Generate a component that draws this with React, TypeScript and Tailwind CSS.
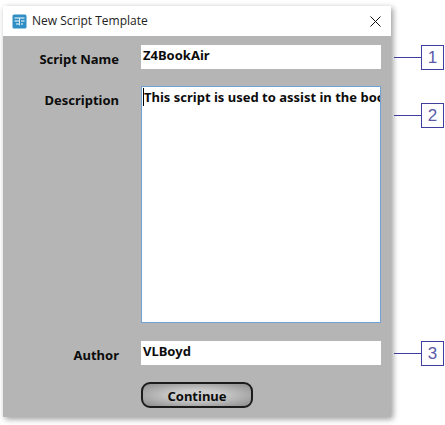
const boldFont = "font-['Noto_Sans',sans-serif] font-bold text-[13px] leading-[18px] text-[#0c0c0c]"

function Callout({ n, className }: { n: number; className: string }) {
  return (
    <div className={`flex items-center ${className}`}>
      <div className="w-[27px] h-px bg-[#3f3f9e]" />
      <div className="w-[23px] h-[25px] border border-[#3f3f9e] flex items-center justify-center text-[17px] text-[#5a5aa8] font-['Liberation_Sans',sans-serif]">
        {n}
      </div>
    </div>
  )
}

export default function App() {
  return (
    <div className="w-[445px] h-[425px] bg-white flex overflow-hidden">
      {/* Dialog window */}
      <div className="ml-[3px] mt-[6px] w-[388px] h-[411px] flex flex-col bg-[#b5b5b5] shadow-[2px_2px_6px_rgba(0,0,0,0.4)]">
        <div className="h-[30px] bg-white flex items-center pl-[9px] pr-[9px]">
          <svg width="15" height="15" viewBox="0 0 15 15" className="shrink-0">
            <rect x="0.5" y="0.5" width="14" height="14" rx="1.5" fill="#2f8fc4" />
            <path d="M2.5 4h10M2.5 7h4.5M9 7h3.5M4 10h3M9 10h2" stroke="#fff" strokeWidth="1.2" />
            <path d="M7.5 4v7.5" stroke="#d5ebf7" strokeWidth="1" />
          </svg>
          <span className="ml-[5px] flex-1 text-[12px] text-[#222] font-['Open_Sans',sans-serif]">New Script Template</span>
          <svg width="11" height="11" viewBox="0 0 11 11" className="shrink-0 mr-[1px]">
            <path d="M0.5 0.5l10 10M10.5 0.5l-10 10" stroke="#111" strokeWidth="1" fill="none" />
          </svg>
        </div>

        <div className="flex-1 flex flex-col pt-[9px] pr-[10px]">
          <div className="flex">
            <div className={`w-[116px] pt-[5px] text-right ${boldFont}`}>Script Name</div>
            <div className={`ml-[22px] w-[240px] h-[24px] bg-white pl-[2px] pt-[1px] ${boldFont}`}>Z4BookAir</div>
          </div>

          <div className="flex mt-[17px]">
            <div className={`w-[116px] pt-[5px] text-right ${boldFont}`}>Description</div>
            <div className={`ml-[22px] w-[240px] h-[237px] bg-white border border-[#6fa3d8] pl-[1px] pt-[1px] overflow-hidden whitespace-nowrap ${boldFont}`}>
              <span className="border-l border-black">This script is used to assist in the boo</span>
            </div>
          </div>

          <div className="flex mt-[18px]">
            <div className={`w-[116px] pt-[5px] text-right ${boldFont}`}>Author</div>
            <div className={`ml-[22px] w-[240px] h-[24px] bg-white pl-[2px] pt-[1px] ${boldFont}`}>VLBoyd</div>
          </div>

          <button className={`ml-[138px] mt-[17px] w-[112px] h-[26px] pt-[1px] rounded-[9px] border-2 border-[#1c1c1c] bg-[radial-gradient(ellipse_at_center,#cdcdcd_30%,#8c8c8c_100%)] flex items-center justify-center ${boldFont}`}>
            Continue
          </button>
        </div>
      </div>

      {/* Callouts */}
      <div className="ml-[3px] flex flex-col">
        <Callout n={1} className="mt-[45px]" />
        <Callout n={2} className="mt-[33px]" />
        <Callout n={3} className="mt-[213px]" />
      </div>
    </div>
  )
}
